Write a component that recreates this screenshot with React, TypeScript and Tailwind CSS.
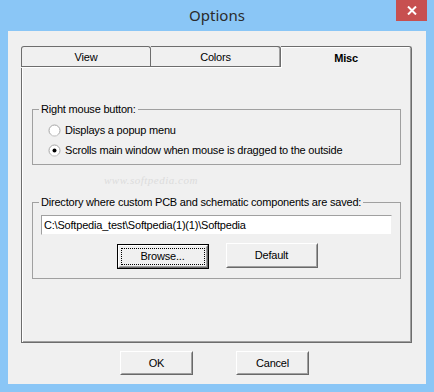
import React from "react";

const font = { fontFamily: '"Liberation Sans", Arial, sans-serif' };

function Radio({ checked }: { checked?: boolean }) {
  return (
    <svg width="13" height="13" viewBox="0 0 13 13" className="shrink-0">
      <circle cx="6.5" cy="6.5" r="5.5" fill="#ffffff" stroke="#a6a6a6" />
      <path d="M2.6 10.4 A5.5 5.5 0 0 0 10.4 10.4" fill="none" stroke="#e4e4e4" />
      {checked && <circle cx="6.5" cy="6.5" r="2" fill="#000" />}
    </svg>
  );
}

function Button({ label, focused, w }: { label: string; focused?: boolean; w: string }) {
  return (
    <div
      className={`${w} flex items-center justify-center bg-[#f0f0f0] ${
        focused ? "border border-black" : ""
      }`}
    >
      <div className="w-full h-full border border-t-white border-l-white border-b-[#696969] border-r-[#696969] flex">
        <div className="w-full h-full border border-t-[#f0f0f0] border-l-[#f0f0f0] border-b-[#a0a0a0] border-r-[#a0a0a0] flex items-center justify-center p-[1px]">
          <div
            className={`w-full h-full flex items-center justify-center text-[11px] text-black ${
              focused ? "border border-dotted border-black" : ""
            }`}
          >
            {label}
          </div>
        </div>
      </div>
    </div>
  );
}

export default function App() {
  return (
    <div className="w-[434px] h-[392px] bg-[#8ac6f6] flex flex-col relative tracking-[-0.2px]" style={font}>
      <div className="h-[31px] flex items-center justify-center">
        <span className="text-[15px] text-[#2b2b2b] mt-[-1px] tracking-normal" style={{ fontFamily: '"Noto Sans", "Open Sans", sans-serif' }}>
          Options
        </span>
      </div>
      <div className="absolute right-[7px] top-0 w-[31px] h-[21px] bg-[#c75050] flex items-center justify-center">
        <svg width="10" height="9" viewBox="0 0 10 9">
          <path d="M1 0.5 L9 8.5 M9 0.5 L1 8.5" stroke="#fff" strokeWidth="2" />
        </svg>
      </div>

      <div className="ml-[8px] w-[418px] h-[353px] bg-[#f0f0f0] pt-[15px] px-[13px] flex flex-col">
        {/* Tabs */}
        <div className="flex h-[22px] w-[391px] text-[11px] text-black">
          <div className="w-[130px] flex flex-col">
            <div className="flex-1 border-t border-l border-r border-[#6d6d6d] rounded-tl-[3px] rounded-tr-[3px] flex items-center justify-center pt-[1px]">
              View
            </div>
            <div className="h-[1px] bg-[#6d6d6d]" />
            <div className="h-[1px] bg-white ml-[1px]" />
          </div>
          <div className="w-[130px] flex flex-col">
            <div className="flex-1 border-t border-r border-[#6d6d6d] rounded-tr-[3px] flex items-center justify-center pt-[1px] shadow-[inset_-1px_0_0_#a0a0a0]">
              Colors
            </div>
            <div className="h-[1px] bg-[#6d6d6d]" />
            <div className="h-[1px] bg-white" />
          </div>
          <div className="w-[131px] border-t border-r border-[#6d6d6d] rounded-tr-[3px] shadow-[inset_1px_1px_0_#ffffff,inset_-1px_0_0_#a0a0a0] flex items-center justify-center font-bold pt-[1px]">
            Misc
          </div>
        </div>

        {/* Panel */}
        <div className="w-[391px] h-[275px] border-l border-r border-b border-[#6d6d6d] shadow-[inset_1px_0_0_#ffffff,inset_-1px_-1px_0_#a0a0a0] pt-[35px] px-[10px] flex flex-col text-[11px] text-black">
          <fieldset className="border border-[#a0a0a0] pl-[6px] pr-[6px] h-[62px] flex flex-col">
            <legend className="px-[2px] leading-[13px]">Right mouse button:</legend>
            <div className="ml-[9px] mt-[4px] h-[20px] flex items-center gap-[4px]">
              <Radio />
              <span>Displays a popup menu</span>
            </div>
            <div className="ml-[9px] h-[20px] flex items-center gap-[4px] relative">
              <Radio checked />
              <span>Scrolls main window when mouse is dragged to the outside</span>
            </div>
          </fieldset>

          <div className="h-[31px] flex items-center pl-[72px]">
            <span className="text-[11px] text-[#dcdcdc] italic tracking-[0.5px]" style={{ fontFamily: '"Liberation Serif", serif' }}>
              www.softpedia.com
            </span>
          </div>

          <fieldset className="border border-[#a0a0a0] pl-[6px] pr-[6px] h-[83px] flex flex-col">
            <legend className="px-[2px] leading-[13px]">
              Directory where custom PCB and schematic components are saved:
            </legend>
            <div className="ml-[2px] mt-[6px] w-[351px] h-[20px] bg-white border border-t-[#a0a0a0] border-l-[#a0a0a0] border-b-[#f0f0f0] border-r-[#f0f0f0] flex items-center pl-[2px]">
              <span>C:\Softpedia_test\Softpedia(1)(1)\Softpedia</span>
            </div>
            <div className="mt-[9px] flex justify-center gap-[17px] ml-[1px]">
              <div className="h-[25px] flex">
                <Button label="Browse..." focused w="w-[92px]" />
              </div>
              <div className="h-[25px] flex mt-[-1px]">
                <Button label="Default" w="w-[92px]" />
              </div>
            </div>
          </fieldset>
        </div>

        {/* Bottom buttons */}
        <div className="mt-[8px] flex justify-center gap-[43px] pr-[5px]">
          <div className="h-[24px] flex">
            <Button label="OK" w="w-[73px]" />
          </div>
          <div className="h-[24px] flex">
            <Button label="Cancel" w="w-[73px]" />
          </div>
        </div>
      </div>
    </div>
  );
}
